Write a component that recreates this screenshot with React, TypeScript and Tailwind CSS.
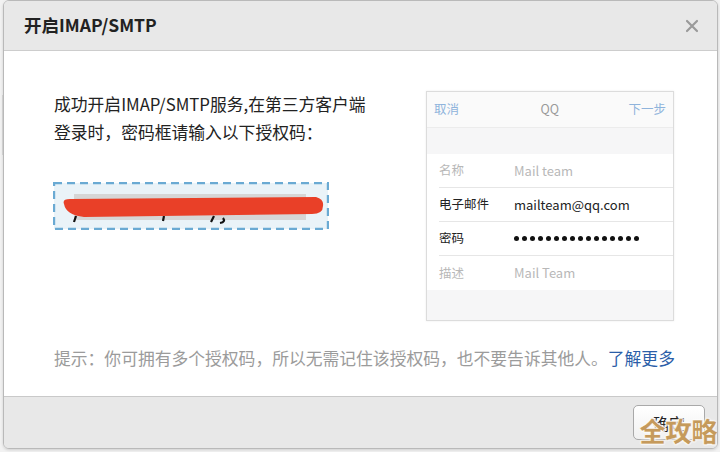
import React from 'react';

const CJK = '"Noto Sans CJK SC", "Noto Sans", sans-serif';

function AuthCode() {
  // the code itself is blotted out with a red marker stroke
  return (
    <svg width="276" height="48" viewBox="0 0 276 48" className="block">
      <rect x="1" y="1" width="274" height="46" fill="#eaf3f8" stroke="#6aaad3" strokeWidth="2.4" strokeDasharray="8 5" />
      <rect x="21" y="12" width="232" height="26" fill="#d6d6d6" />
      <path d="M23 34 l-2 6 M111 34 l-1 5 M161 34 l-3 6 M170 36 q3 4 -3 5" stroke="#111" strokeWidth="2.2" fill="none" />
      <path d="M11 22 Q9 17 17 17 L263 15 Q271 17 270 24 Q270 32 259 32 L31 35 Q13 33 11 22 Z" fill="#e94028" />
    </svg>
  );
}

function Dots() {
  return (
    <span className="flex gap-[3px] items-center">
      {Array.from({ length: 16 }).map((_, i) => (
        <span key={i} className="w-[5px] h-[5px] rounded-full bg-[#111]" />
      ))}
    </span>
  );
}

function Row({ label, value, dark, last }: { label: string; value: React.ReactNode; dark?: boolean; last?: boolean }) {
  return (
    <div className="pl-[12px] bg-white">
      <div className={`flex items-center h-[34px] ${last ? '' : 'border-b border-[#e6e6e6]'}`}>
        <span className={`w-[75px] text-[12.5px] ${dark ? 'text-[#222]' : 'text-[#b8b8b8]'}`}>{label}</span>
        <span className={`text-[13px] ${dark ? 'text-[#222]' : 'text-[#b8b8b8]'}`}>{value}</span>
      </div>
    </div>
  );
}

function PhoneShot() {
  return (
    <div className="w-[248px] h-[230px] border border-[#dcdcdc] bg-[#f6f6f7] flex flex-col shadow-[0_0_2px_rgba(0,0,0,0.08)]">
      <div className="h-[36px] bg-[#fafafa] border-b border-[#ececec] flex items-center justify-between px-[7px] text-[12.5px]">
        <span className="text-[#8fb4dc]">取消</span>
        <span className="text-[#9a9a9a] ml-[12px]">QQ</span>
        <span className="text-[#8fb4dc]">下一步</span>
      </div>
      <div className="h-[26px]" />
      <Row label="名称" value="Mail team" />
      <Row label="电子邮件" value="mailteam@qq.com" dark />
      <Row label="密码" value={<Dots />} dark />
      <Row label="描述" value="Mail Team" last />
    </div>
  );
}

export default function App() {
  return (
    <div className="w-[720px] h-[452px] bg-[#f2f2f2] overflow-hidden relative" style={{ fontFamily: CJK }}>
      <div className="absolute left-0 top-[95px] w-[3px] h-[60px] border-r border-[#cfcfcf]" />
      <div className="ml-[3px] w-[715px] h-[449px] rounded-[6px] border border-[#b9b9b9] overflow-hidden flex flex-col shadow-[0_1px_3px_rgba(0,0,0,0.15)]">
        <div className="h-[50px] shrink-0 bg-[#e8e8e8] border-b border-[#cdcdcd] flex items-center justify-between pl-[20px] pr-[18px]">
          <span className="text-[17.5px] font-bold text-[#222]">开启IMAP/SMTP</span>
          <svg width="14" height="14" viewBox="0 0 14 14">
            <path d="M2 2 L12 12 M12 2 L2 12" stroke="#9a9a9a" strokeWidth="2.2" strokeLinecap="round" />
          </svg>
        </div>

        <div className="flex-1 bg-white flex flex-col">
          <div className="flex pt-[40px] pl-[50px]">
            <div className="w-[372px] flex flex-col">
              <p className="text-[16.8px] leading-[28px] text-[#222] -mt-[1px]">
                成功开启IMAP/SMTP服务,在第三方客户端
                <br />
                登录时，密码框请输入以下授权码：
              </p>
              <div className="mt-[36px] -ml-[1px]">
                <AuthCode />
              </div>
            </div>
            <PhoneShot />
          </div>
          <p className="mt-[25px] pl-[50px] text-[16.8px] leading-[24px] text-[#9b9b9b]">
            提示：你可拥有多个授权码，所以无需记住该授权码，也不要告诉其他人。
            <a className="text-[#2b5ea8]">了解更多</a>
          </p>
        </div>

        <div className="h-[52px] shrink-0 bg-[#e8e8e8] border-t border-[#c9c9c9] flex items-center justify-end pr-[12px] relative">
          <button className="w-[72px] h-[35px] rounded-[5px] border border-[#a9a9a9] bg-gradient-to-b from-white to-[#f1f1f1] text-[16px] text-[#222]">
            确定
          </button>
          <span
            className="absolute right-[0px] top-[20px] text-[27px] font-black text-[#c59a5c] leading-none tracking-[-1px]"
            style={{ WebkitTextStroke: '0.5px #fff', textShadow: '0 0 2px #fff, 0 0 2px #fff' }}
          >
            全攻略
          </span>
        </div>
      </div>
    </div>
  );
}
